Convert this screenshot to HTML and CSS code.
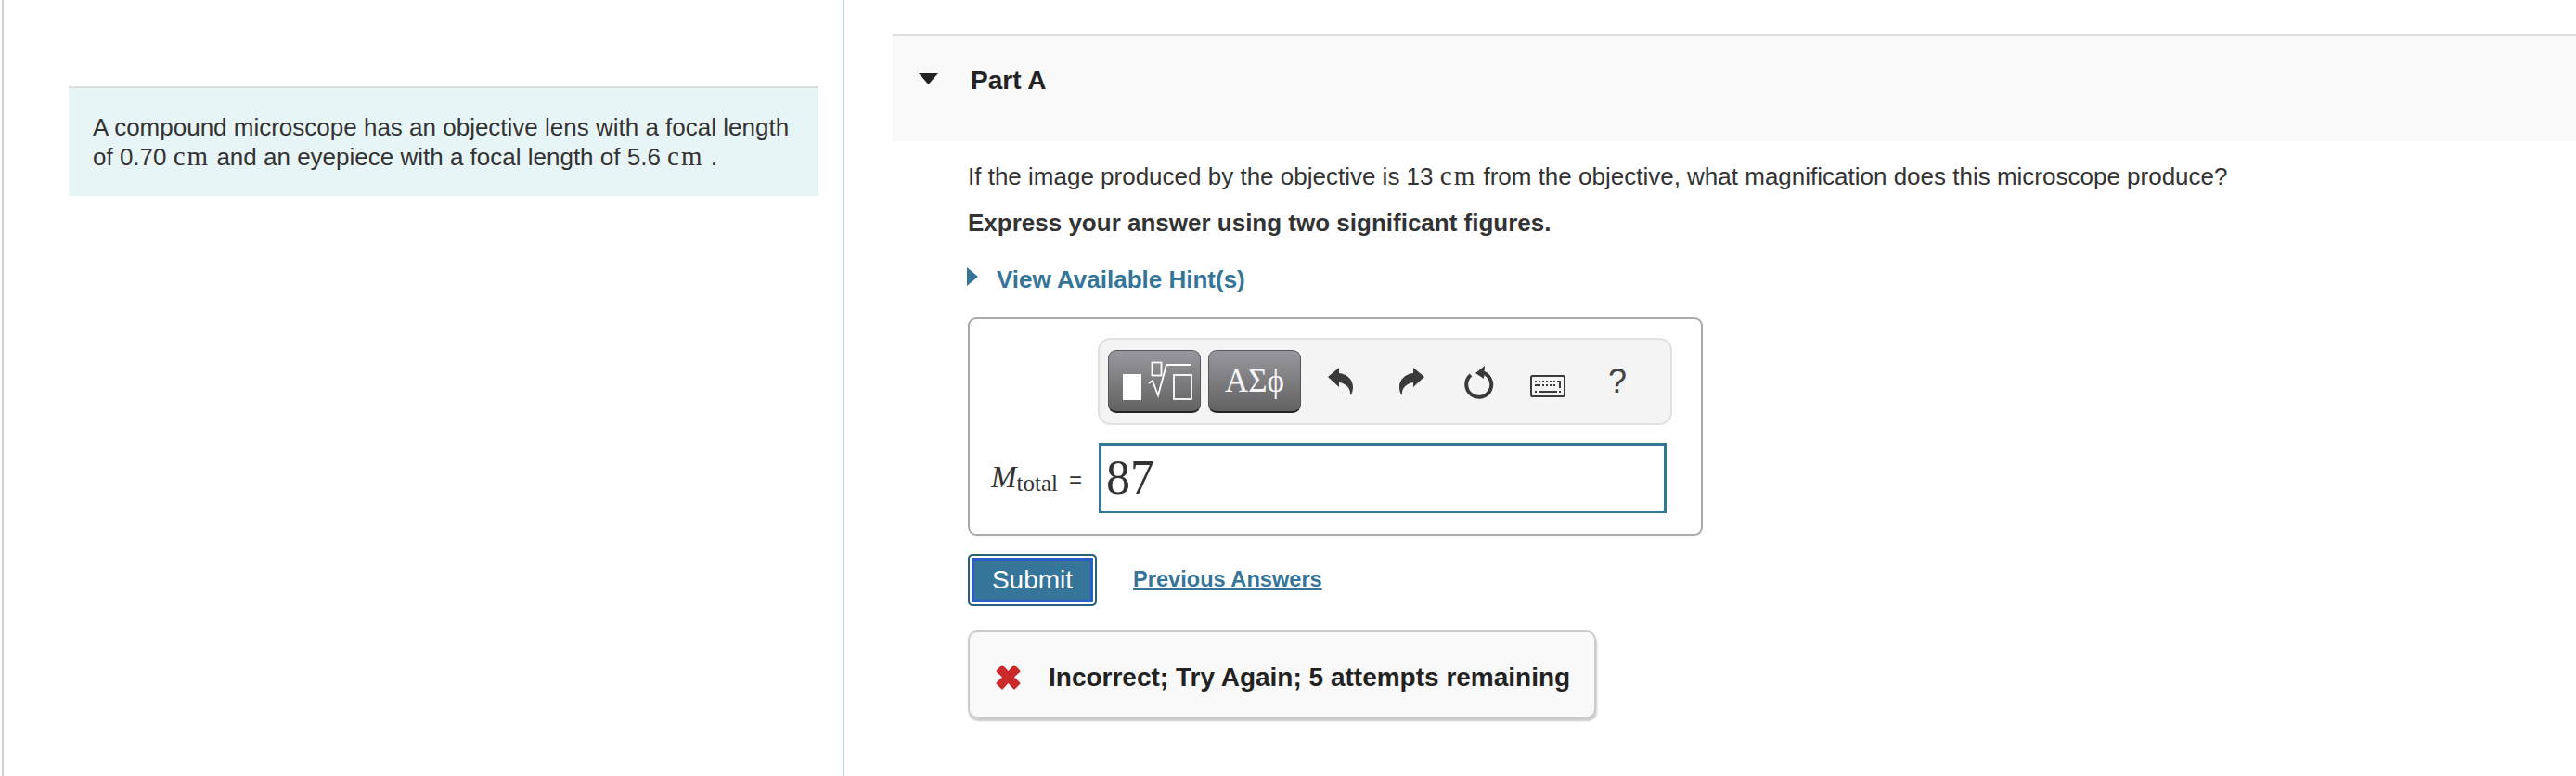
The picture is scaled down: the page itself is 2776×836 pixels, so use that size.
FILE: index.html
```html
<!DOCTYPE html>
<html lang="en">
<head>
<meta charset="utf-8">
<title>Part A</title>
<link rel="stylesheet" href="styles.css">
</head>
<body>
<div class="page">
  <aside class="left">
    <div class="intro"><span class="line">A compound microscope has an objective lens with a focal length</span> <span class="line">of 0.70 <span class="unit">cm</span> and an eyepiece with a focal length of 5.6 <span class="unit">cm</span> .</span></div>
  </aside>
  <main class="right">
    <header class="part-head">
      <svg class="caret" viewBox="0 0 21 12"><path d="M0 0H21L10.5 12Z"/></svg>
      <h2>Part A</h2>
    </header>
    <section class="part-body">
      <p class="q">If the image produced by the objective is 13 <span class="unit">cm</span> from the objective, what magnification does this microscope produce?</p>
      <p class="q strong">Express your answer using two significant figures.</p>
      <div class="hint">
        <svg class="hint-caret" viewBox="0 0 12 20"><path d="M0 0L12 10L0 20Z"/></svg>
        <a href="#">View Available Hint(s)</a>
      </div>
      <div class="math-box">
        <div class="toolbar">
          <div class="tool-btn">
            <svg viewBox="0 0 100 68" class="tmpl"><rect x="16" y="26" width="20" height="28" fill="#fff"/><rect x="47.500" y="13.500" width="10" height="14" fill="none" stroke="#fff" stroke-width="1.800"/><path d="M44 36L48 33L54 49L63 16H90" fill="none" stroke="#fff" stroke-width="1.800"/><rect x="71" y="27" width="19" height="26" fill="none" stroke="#fff" stroke-width="1.800"/></svg>
          </div>
          <div class="tool-btn greek">ΑΣϕ</div>
          <svg class="ico undo" viewBox="0 0 27 30"><path d="M0 10L12 0V6C21 7 27 13 27 21C27 25 26 28 24 30C25 23 20 17 12 16V21Z"/></svg>
          <svg class="ico redo" viewBox="0 0 27 30"><path d="M27 10L15 0V6C6 7 0 13 0 21C0 25 1 28 3 30C2 23 7 17 15 16V21Z"/></svg>
          <svg class="ico reset" viewBox="0 0 32 36"><path d="M18 7A13.500 13.500 0 1 1 7 10" fill="none" stroke="#3a3a3a" stroke-width="4"/><path d="M12 8L22 0L21 14Z"/></svg>
          <svg class="ico kbd" viewBox="0 0 38 24"><rect x="1" y="1" width="36" height="22" rx="1.500" fill="none" stroke="#3a3a3a" stroke-width="2"/><path d="M5 6h2v2H5zM9 6h2v2H9zM13 6h2v2h-2zM17 6h2v2h-2zM21 6h2v2h-2zM25 6h2v2h-2zM29 6h4v8h-2v-6h-2zM5 10h6v2H5zM13 10h2v2h-2zM17 10h2v2h-2zM21 10h2v2h-2zM25 10h2v2h-2zM5 17h2v2H5zM9 17h20v2H9zM31 17h2v2h-2z"/></svg>
          <span class="help">?</span>
        </div>
        <div class="answer-row">
          <span class="label"><i>M</i><sub>total</sub><span class="eq">=</span></span>
          <div class="answer">87</div>
        </div>
      </div>
      <div class="actions">
        <button class="submit">Submit</button>
        <a class="prev" href="#">Previous Answers</a>
      </div>
      <div class="feedback">
        <svg class="x" viewBox="0 0 27 27"><path d="M1 6L6 1Q7 0 8 1L13.500 7L19 1Q20 0 21 1L26 6Q27 7 26 8L20 13.500L26 19Q27 20 26 21L21 26Q20 27 19 26L13.500 20L8 26Q7 27 6 26L1 21Q0 20 1 19L7 13.500L1 8Q0 7 1 6Z"/></svg>
        <span>Incorrect; Try Again; 5 attempts remaining</span>
      </div>
    </section>
  </main>
</div>
</body>
</html>
```
FILE: styles.css
```css
* { box-sizing: border-box; }
html, body { margin: 0; padding: 0; background: #fff; }
body { font-family: "Liberation Sans", Arial, sans-serif; font-size: 26px; color: #333; }
.page { display: flex; height: 836px; width: 2776px; overflow: hidden; }
.left { width: 908px; margin-left: 2px; flex: none; border-left: 2px solid #d2d2d2; border-right: 2px solid #c3d0e3; padding: 93px 26px 0 70px; }
.intro { height: 118px; border-top: 2px solid #ddd; background: #e8f5f6; padding: 26px 26px 0; line-height: 32px; }
.line { display: block; white-space: nowrap; }
.unit { display: inline-block; font-family: "Liberation Serif", serif; font-size: 29px; line-height: 24px; letter-spacing: 2px; }
.right { flex: 1; padding: 37px 0 0 52px; min-width: 0; }
.part-head { height: 115px; border-top: 2px solid #ddd; background: #f9f9f9; display: flex; align-items: flex-start; padding: 40px 0 0 28px; }
.caret { width: 21px; height: 12px; fill: #222; flex: none; }
.part-head h2 { margin: -10px 0 0 35px; font-size: 28px; line-height: 36px; color: #222; font-weight: bold; }
.part-body { padding: 20px 0 0 81px; }
.q { margin: 0 0 14px; line-height: 36px; }
.strong { font-weight: bold; margin-bottom: 24px; }
.hint { display: flex; align-items: center; height: 36px; padding-top: 2px; }
.hint-caret { width: 12px; height: 20px; fill: #35759a; margin: -6px 20px 0 -1px; }
.hint a { color: #35759a; font-weight: bold; text-decoration: none; }
.math-box { width: 792px; height: 235px; margin-top: 24px; border: 2px solid #aaa; border-radius: 9px; padding: 20px 0 0; }
.toolbar { width: 619px; height: 94px; margin-left: 138px; background: #f4f4f4; border: 2px solid #e0e0e0; border-radius: 14px; display: flex; align-items: center; padding-left: 9px; }
.tool-btn { width: 100px; height: 68px; border-radius: 9px; background: linear-gradient(#98979e, #626262); border: 1px solid #555; border-bottom: 2px solid #222; color: #fff; margin-right: 8px; flex: none; display: flex; align-items: center; justify-content: center; }
.tool-btn.greek { font-family: "Liberation Serif", serif; font-size: 35px; color: #f6f6f6; }
.tmpl { width: 100px; height: 68px; margin: -1px; flex: none; }
.ico { flex: none; fill: #3a3a3a; }
.undo { width: 27px; height: 30px; margin-left: 21px; }
.redo { width: 27px; height: 30px; margin-left: 50px; }
.reset { width: 32px; height: 36px; margin: 1px 0 0 43px; }
.kbd { width: 38px; height: 24px; margin-left: 39px; margin-top: 10px; }
.help { font-family: "Liberation Sans", sans-serif; font-size: 36px; color: #444; margin-left: 46px; }
.answer-row { display: flex; align-items: center; margin-top: 19px; height: 76px; }
.label { width: 139px; padding: 0 0 2px 23px; font-family: "Liberation Serif", serif; font-size: 33px; flex: none; white-space: nowrap; }
.label sub { font-size: 25px; vertical-align: -4px; line-height: 0; }
.label .eq { font-family: "Liberation Sans", sans-serif; font-size: 24px; margin-left: 12px; }
.answer { width: 612px; height: 76px; border: 3px solid #35759a; font-family: "Liberation Serif", serif; font-size: 52px; line-height: 70px; padding-left: 5px; color: #333; }
.actions { display: flex; align-items: center; margin-top: 20px; height: 56px; }
.submit { width: 139px; height: 56px; background: #35759a; color: #fff; border: 2px solid #26607c; border-radius: 5px; box-shadow: inset 0 0 0 2px #fff, inset 0 0 0 5px #2a5fc8; font: 28px "Liberation Sans", sans-serif; padding: 0; }
.prev { margin: -2px 0 0 39px; color: #35759a; font-weight: bold; font-size: 23.6px; }
.feedback { width: 677px; height: 95px; margin-top: 26px; border: 2px solid #ccc; border-radius: 10px; background: #f9f9f9; box-shadow: 1px 3px 2px #ccc; display: flex; align-items: center; padding: 6px 0 0 28px; color: #222; font-weight: bold; font-size: 28px; }
.x { width: 27px; height: 27px; fill: #cb2a2a; margin-right: 30px; flex: none; }
```
